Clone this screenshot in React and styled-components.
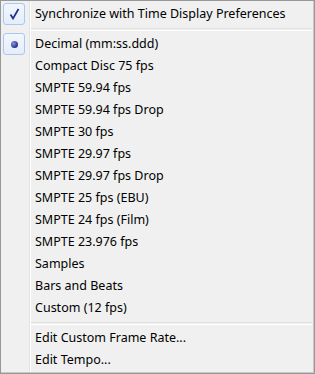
import styled, { createGlobalStyle } from 'styled-components';

const formats = [
    { label: 'Decimal (mm:ss.ddd)', mark: 'radio' },
    { label: 'Compact Disc 75 fps' },
    { label: 'SMPTE 59.94 fps' },
    { label: 'SMPTE 59.94 fps Drop' },
    { label: 'SMPTE 30 fps' },
    { label: 'SMPTE 29.97 fps' },
    { label: 'SMPTE 29.97 fps Drop' },
    { label: 'SMPTE 25 fps (EBU)' },
    { label: 'SMPTE 24 fps (Film)' },
    { label: 'SMPTE 23.976 fps' },
    { label: 'Samples' },
    { label: 'Bars and Beats' },
    { label: 'Custom (12 fps)' },
];

const editItems = ['Edit Custom Frame Rate...', 'Edit Tempo...'];

const GlobalStyle = createGlobalStyle`
    html, body {
        margin: 0;
        padding: 0;
        background: #ffffff;
    }
`;

const Menu = styled.div`
    box-sizing: border-box;
    width: 315px;
    height: 374px;
    padding: 2px;
    border: 1px solid #979797;
    box-shadow: inset -1px -1px 0 #c8c8c8;
    background-color: #f0f0f0;
    background-image: linear-gradient(to right,
        transparent 28px, #e2e3e3 28px, #e2e3e3 29px, #ffffff 29px, #ffffff 30px, transparent 30px);
    background-origin: padding-box;
    background-repeat: no-repeat;
    font-family: "Noto Sans", "Open Sans", sans-serif;
    font-size: 12.5px;
    color: #000000;
    display: flex;
    flex-direction: column;
`;

const Item = styled.div`
    display: flex;
    align-items: center;
    height: 22px;
`;

const Gutter = styled.div`
    width: 22px;
    height: 22px;
    margin-right: 10px;
    box-sizing: border-box;
    display: flex;
    align-items: center;
    justify-content: center;
    border-radius: 3px;
    border: 1px solid ${({ $active }) => ($active ? '#a8c8ec' : 'transparent')};
    background: ${({ $active }) => ($active ? 'linear-gradient(#f2f6fd, #e5edfb)' : 'transparent')};
`;

const Label = styled.span`
    white-space: nowrap;
    line-height: 22px;
`;

const Separator = styled.div`
    height: 8px;
    display: flex;
    align-items: center;
    padding-left: 28px;
    &::after {
        content: '';
        flex: 1;
        height: 1px;
        border-top: 1px solid #e0e0e0;
        border-bottom: 1px solid #ffffff;
    }
`;

const RadioDot = styled.span`
    width: 7px;
    height: 7px;
    border-radius: 50%;
    background: radial-gradient(circle at 35% 35%, #8a94d8, #27318a 70%);
`;

const CheckMark = () => (
    <svg width="11" height="12" viewBox="0 0 11 12">
        <path d="M1.5 6.5 L4 10.5 L9.5 1" fill="none" stroke="#1f2e8f" strokeWidth="1.7" />
    </svg>
);

const MenuItem = ({ label, mark }) => (
    <Item>
        <Gutter $active={!!mark}>
            {mark === 'check' && <CheckMark />}
            {mark === 'radio' && <RadioDot />}
        </Gutter>
        <Label>{label}</Label>
    </Item>
);

const App = () => (
    <>
        <GlobalStyle />
        <Menu>
            <MenuItem label="Synchronize with Time Display Preferences" mark="check" />
            <Separator />
            {formats.map(f => (
                <MenuItem key={f.label} label={f.label} mark={f.mark} />
            ))}
            <Separator />
            {editItems.map(label => (
                <MenuItem key={label} label={label} />
            ))}
        </Menu>
    </>
);

export default App;
